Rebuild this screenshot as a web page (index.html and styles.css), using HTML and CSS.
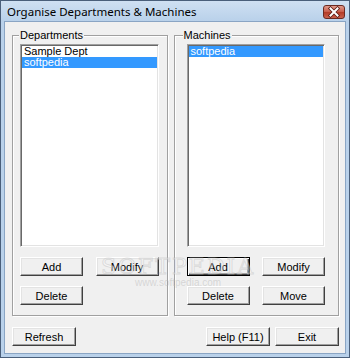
FILE: index.html
```html
<!DOCTYPE html>
<html>
  <head>
    <title>Organise Departments &amp; Machines</title>
    <link rel="stylesheet" href="styles.css">
  </head>
  <body>
    <div class="window">
      <div class="titlebar">
        <span class="title">Organise Departments &amp; Machines</span>
        <span class="close">
          <svg width="22" height="14" viewBox="0 0 22 14">
            <path d="M7.5 3.5 L14.5 10.5 M14.5 3.5 L7.5 10.5" stroke="#5a1a14" stroke-width="3.6" stroke-linecap="square"/>
            <path d="M7.5 3.5 L14.5 10.5 M14.5 3.5 L7.5 10.5" stroke="#fff" stroke-width="2" stroke-linecap="square"/>
          </svg>
        </span>
      </div>

      <div class="client">
        <div class="groups">
          <div class="group group-dept">
            <span class="group-title">Departments</span>
            <div class="listbox">
              <div class="item">Sample Dept</div>
              <div class="item selected">softpedia</div>
            </div>
            <div class="buttons">
              <button class="btn">Add</button>
              <button class="btn">Modify</button>
            </div>
            <div class="buttons">
              <button class="btn">Delete</button>
            </div>
          </div>

          <div class="group group-mach">
            <span class="group-title">Machines</span>
            <div class="listbox">
              <div class="item selected">softpedia</div>
            </div>
            <div class="buttons">
              <button class="btn default">Add</button>
              <button class="btn">Modify</button>
            </div>
            <div class="buttons">
              <button class="btn">Delete</button>
              <button class="btn">Move</button>
            </div>
          </div>
        </div>

        <div class="footer">
          <button class="btn btn-wide">Refresh</button>
          <div class="footer-right">
            <button class="btn btn-wide">Help (F11)</button>
            <button class="btn btn-wide">Exit</button>
          </div>
        </div>

        <div class="watermark">
          <span class="wm-big">SOFTPEDIA</span>
          <span class="wm-small">www.softpedia.com</span>
        </div>
      </div>
    </div>
  </body>
</html>
```

FILE: styles.css
```css
body{
    margin: 0;
    font-family: "Liberation Sans", Arial, sans-serif;
    font-size: 11px;
    color: #000;
}

.window{
    width: 350px;
    height: 358px;
    box-sizing: border-box;
    background-color: #b9d1ea;
    border: 1px solid #4a5f7a;
    display: flex;
    flex-direction: column;
}

.titlebar{
    height: 20px;
    display: flex;
    align-items: center;
    justify-content: space-between;
    padding: 0 4px 0 6px;
    background: linear-gradient(#cfe0f2, #b9d1ea);
}

.title{
    font-family: "Noto Sans", "DejaVu Sans", sans-serif;
    font-size: 11.5px;
    color: #000;
    padding-top: 1px;
}

.close{
    width: 22px;
    height: 14px;
    margin-top: 1px;
    border: 1px solid #6b2a22;
    border-radius: 3px;
    background: linear-gradient(#e09a8c, #c75a48 50%, #b23a26 51%, #c9604c);
    box-sizing: border-box;
    display: flex;
    align-items: center;
    justify-content: center;
    overflow: hidden;
}

.close svg{
    display: block;
    flex: none;
}

.client{
    position: relative;
    flex: 1;
    margin: 0 3px 3px 3px;
    background-color: #f0f0f0;
    border: 1px solid #8aa5c4;
    padding: 13px 6px 0 7px;
    display: flex;
    flex-direction: column;
}

.groups{
    display: flex;
    gap: 6px;
    height: 281px;
}

.group{
    box-sizing: border-box;
    border: 1px solid #a0a0a0;
    box-shadow: inset 1px 1px 0 #fff, 1px 1px 0 #fff;
    display: flex;
    flex-direction: column;
    padding-bottom: 10px;
}

.group-dept{
    width: 156px;
    padding-left: 7px;
    padding-right: 8px;
}

.group-mach{
    width: 166px;
    padding-left: 12px;
    padding-right: 13px;
}

.group-title{
    display: block;
    width: fit-content;
    height: 13px;
    line-height: 13px;
    margin: -7px 0 0 -1px;
    padding: 0 1px;
    background-color: #f0f0f0;
}

.group-mach .group-title{
    margin-left: -4px;
}

.listbox{
    flex: 1;
    margin-top: 2px;
    background-color: #fff;
    border-style: solid;
    border-width: 1px;
    border-color: #a0a0a0 #fff #fff #a0a0a0;
    box-shadow: inset 1px 1px 0 #696969, inset -1px -1px 0 #e3e3e3;
    padding: 1px;
}

.item{
    height: 11px;
    line-height: 11px;
    padding-left: 2px;
    white-space: nowrap;
}

.item.selected{
    background-color: #3399ff;
    color: #fff;
}

.buttons{
    display: flex;
    justify-content: space-between;
    margin-top: 10px;
}

.btn{
    width: 63px;
    height: 19px;
    padding: 0;
    margin: 0;
    font-family: "Liberation Sans", Arial, sans-serif;
    font-size: 11px;
    color: #000;
    background-color: #f0f0f0;
    border-style: solid;
    border-width: 1px;
    border-color: #fff #404040 #404040 #fff;
    box-shadow: inset -1px -1px 0 #a0a0a0, inset 1px 1px 0 #e3e3e3;
    box-sizing: border-box;
}

.btn.default{
    border: 1px solid #000;
    box-shadow: inset 1px 1px 0 #fff, inset -1px -1px 0 #404040, inset -2px -2px 0 #a0a0a0;
}

.btn-wide{
    width: 64px;
}

.footer{
    display: flex;
    justify-content: space-between;
    margin-top: 11px;
}

.footer-right{
    display: flex;
    gap: 5px;
}

/* watermark of the screenshot site */
.watermark{
    position: absolute;
    left: 96px;
    top: 232px;
    display: flex;
    flex-direction: column;
    align-items: center;
    pointer-events: none;
}

.wm-big{
    font-family: "DejaVu Serif", serif;
    font-size: 22px;
    letter-spacing: 2px;
    color: rgba(255, 255, 255, 0.35);
    -webkit-text-stroke: 1px rgba(190, 190, 190, 0.45);
}

.wm-small{
    font-size: 10px;
    color: rgba(180, 180, 180, 0.45);
    margin-top: -2px;
}
```
